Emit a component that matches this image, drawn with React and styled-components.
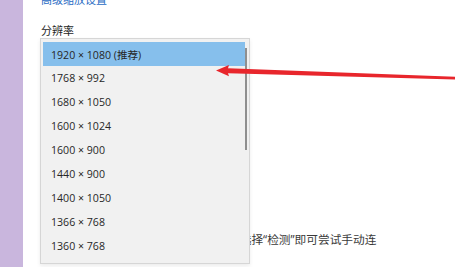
import React from "react";
import styled, { createGlobalStyle } from "styled-components";

const Global = createGlobalStyle`
  html, body { margin: 0; padding: 0; background: #ffffff; }
  body {
    width: 455px; height: 267px; overflow: hidden;
    font-family: "Open Sans", "Noto Sans CJK SC", sans-serif;
  }
`;

const Page = styled.div`
  display: flex;
  width: 455px;
  height: 267px;
  position: relative;
  overflow: hidden;
`;

const Sidebar = styled.div`
  width: 23px;
  flex: none;
  background: #c9b6dd;
`;

const Main = styled.div`
  flex: 1;
  padding-left: 18px;
  display: flex;
  flex-direction: column;
  align-items: flex-start;
`;

const Link = styled.div`
  margin-top: -8px;
  font-size: 11px;
  line-height: 16px;
  color: #2a6cc4;
`;

const Label = styled.div`
  margin-top: 16px;
  font-size: 11px;
  line-height: 14px;
  color: #262626;
`;

const Field = styled.div`
  position: relative;
  width: 100%;
`;

const ClosedSelect = styled.div`
  width: 208px;
  height: 30px;
  border: 1px solid #999;
  box-sizing: border-box;
`;

const Note = styled.p`
  margin: 163px 0 0 0;
  width: 340px;
  font-size: 11.7px;
  line-height: 16px;
  color: #3a3a3a;
`;

const List = styled.div`
  position: absolute;
  top: 0;
  left: -1px;
  width: 210px;
  height: 226px;
  box-sizing: border-box;
  border: 1px solid #d6d6d6;
  background: #f1f1f1;
  display: flex;
  box-shadow: 0 2px 4px rgba(0, 0, 0, 0.08);
`;

const Items = styled.div`
  flex: 1;
  padding: 3px 0 3px 2px;
  display: flex;
  flex-direction: column;
`;

const Item = styled.div`
  height: 24px;
  display: flex;
  align-items: center;
  padding-left: 8px;
  font-size: 10.6px;
  color: #262626;
  background: ${(p) => (p.$selected ? "#86bfec" : "transparent")};
`;

const Track = styled.div`
  width: 4px;
  flex: none;
  padding-top: 9px;
  display: flex;
  justify-content: flex-start;
`;

const Thumb = styled.div`
  width: 2px;
  height: 102px;
  background: #8f8f8f;
`;

const Arrow = styled.svg`
  position: absolute;
  left: 0;
  top: 0;
  pointer-events: none;
`;

const resolutions = [
  "1920 × 1080 (推荐)",
  "1768 × 992",
  "1680 × 1050",
  "1600 × 1024",
  "1600 × 900",
  "1440 × 900",
  "1400 × 1050",
  "1366 × 768",
  "1360 × 768",
];

export default function App() {
  return (
    <>
      <Global />
      <Page>
        <Sidebar />
        <Main>
          <Link>高级缩放设置</Link>
          <Label>分辨率</Label>
          <Field>
            <ClosedSelect />
            <Note>较旧的显示器可能不会总是自动连接。选择“检测”即可尝试手动连接。</Note>
            <List>
              <Items>
                {resolutions.map((r, i) => (
                  <Item key={r} $selected={i === 0}>
                    {r}
                  </Item>
                ))}
              </Items>
              <Track>
                <Thumb />
              </Track>
            </List>
          </Field>
        </Main>
        <Arrow width="455" height="267" viewBox="0 0 455 267">
          <path
            d="M216 70.5 L229 65 L228 68.2 L455 76.8 L455 79.6 L228 73.3 L229 76.2 Z"
            fill="#e8262c"
          />
        </Arrow>
      </Page>
    </>
  );
}
